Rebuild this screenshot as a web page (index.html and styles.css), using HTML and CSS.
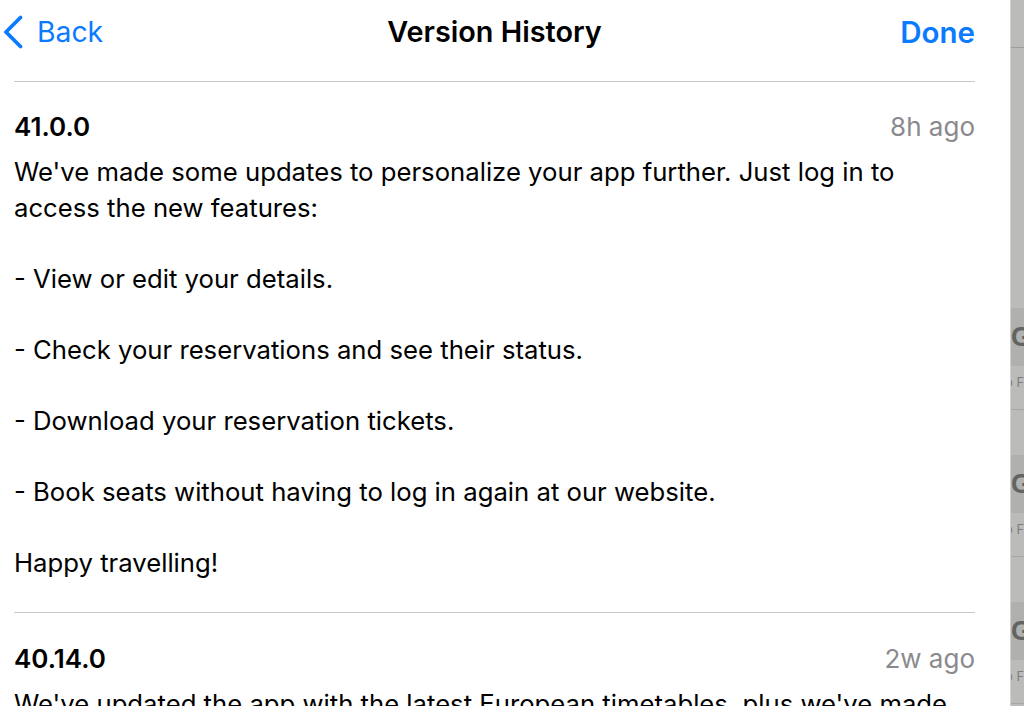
FILE: index.html
```html
<!DOCTYPE html>
<html lang="en">
<head>
<meta charset="utf-8">
<title>Version History</title>
<link rel="stylesheet" href="styles.css">
</head>
<body>
<div class="screen">
  <div class="sheet">
    <header class="nav">
      <a class="nav-back" href="#">
        <svg class="chev" width="22" height="34" viewBox="0 0 22 34" aria-hidden="true"><path d="M18.5 2.5 L4 17 L18.5 31.5" fill="none" stroke="#0a7aff" stroke-width="3.8" stroke-linecap="round" stroke-linejoin="round"/></svg>
        <span>Back</span>
      </a>
      <h1 class="nav-title">Version History</h1>
      <a class="nav-done" href="#">Done</a>
    </header>
    <main class="list">
      <article class="entry">
        <div class="entry-head">
          <h2 class="version">41.0.0</h2>
          <span class="age">8h ago</span>
        </div>
        <div class="notes">
          <p>We've made some updates to personalize your app further. Just log in to access the new features:</p>
          <p>- View or edit your details.</p>
          <p>- Check your reservations and see their status.</p>
          <p>- Download your reservation tickets.</p>
          <p>- Book seats without having to log in again at our website.</p>
          <p>Happy travelling!</p>
        </div>
      </article>
      <article class="entry">
        <div class="entry-head">
          <h2 class="version">40.14.0</h2>
          <span class="age">2w ago</span>
        </div>
        <div class="notes">
          <p>We've updated the app with the latest European timetables, plus we've made some improvements.</p>
        </div>
      </article>
    </main>
  </div>
  <aside class="backdrop" aria-hidden="true">
    <div class="bd-top"></div>
    <div class="bd-list">
      <div class="bd-row"><div class="bd-band">G</div><div class="bd-sub">o Fr</div></div>
      <div class="bd-row"><div class="bd-band">G</div><div class="bd-sub">o Fr</div></div>
      <div class="bd-row"><div class="bd-band">G</div><div class="bd-sub">o Fr</div></div>
    </div>
  </aside>
</div>
</body>
</html>
```

FILE: styles.css
```css
* { box-sizing: border-box; }

html, body {
  margin: 0;
  padding: 0;
  height: 100%;
  overflow: hidden;
  background: #ffffff;
}

body {
  font-family: Inter, "Liberation Sans", sans-serif;
  color: #000000;
}

.screen {
  display: flex;
  height: 706px;
}

.sheet {
  width: 1010px;
  flex: none;
  background: #ffffff;
  overflow: hidden;
}

/* Navigation bar */
.nav {
  height: 81px;
  padding: 14px 35px 0 14px;
  display: grid;
  grid-template-columns: 1fr auto 1fr;
  align-items: start;
}

.nav-back {
  display: flex;
  align-items: center;
  gap: 13px;
  margin-left: -12px;
  height: 36px;
  color: #0a7aff;
  text-decoration: none;
  font-size: 28.3px;
  justify-self: start;
}

.chev { display: block; flex: none; }

.nav-title {
  margin: 0;
  font-size: 28.8px;
  line-height: 36px;
  font-weight: 600;
  color: #000000;
  text-align: center;
}

.nav-done {
  justify-self: end;
  color: #0a7aff;
  text-decoration: none;
  font-size: 29.5px;
  line-height: 36px;
  font-weight: 600;
}

/* Version list */
.list {
  margin: 0 35px 0 14px;
}

.entry {
  border-top: 1px solid #c8c8ca;
  padding: 27px 0 32px;
}

.entry + .entry {
  padding-top: 28px;
}

.entry-head {
  display: flex;
  justify-content: space-between;
  align-items: center;
  height: 36px;
}

.version {
  margin: 0;
  font-size: 26px;
  font-weight: 600;
  line-height: 36px;
}

.age {
  font-size: 26px;
  line-height: 36px;
  color: #8a8a8e;
}

.notes {
  margin-top: 9px;
  font-size: 25.7px;
  line-height: 35.5px;
}

.notes p { margin: 0; }
.notes p + p { margin-top: 35.5px; }

/* Dimmed page behind the sheet */
.backdrop {
  flex: 1;
  background: #bbbcba;
  border-left: 1px solid #d2d3d1;
  overflow: hidden;
  white-space: nowrap;
}

.bd-top {
  height: 48px;
  border-bottom: 1px solid #9e9f9d;
}

.bd-list {
  padding-top: 260px;
}

.bd-row {
  height: 147px;
}

.bd-band {
  height: 58px;
  background: #b0b1af;
  font-family: "Liberation Sans", sans-serif;
  font-weight: 700;
  font-size: 27px;
  line-height: 58px;
  color: #636462;
}

.bd-sub {
  height: 44px;
  border-bottom: 1px solid #a6a7a5;
  font-size: 13px;
  line-height: 32px;
  color: #7e7f7d;
  text-indent: -6px;
}
```
